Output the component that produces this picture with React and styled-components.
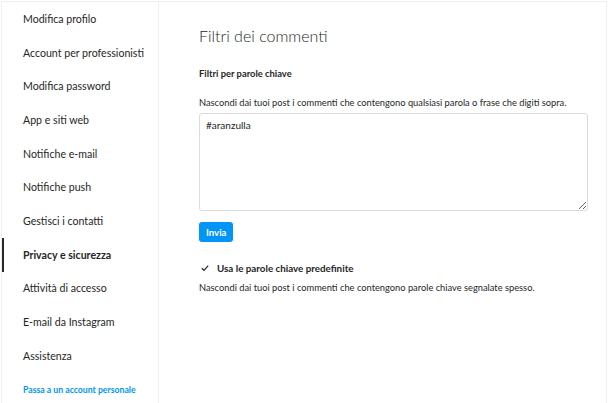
import * as React from 'react'
import styled, { createGlobalStyle } from 'styled-components'

const GlobalStyle = createGlobalStyle`
  body {
    margin: 0;
    background: #ffffff;
    font-family: Lato, 'Open Sans', sans-serif;
    color: #262626;
  }
`

const Frame = styled.div`
  display: flex;
  width: 606px;
  height: 420px;
  margin: 1px 0 0 1px;
  border: 1px solid #efefef;
  border-bottom: none;
  box-sizing: border-box;
`

const Sidebar = styled.nav`
  width: 156px;
  flex-shrink: 0;
  border-right: 1px solid #efefef;
  display: flex;
  flex-direction: column;
`

const NavItem = styled.div`
  height: 33.7px;
  display: flex;
  align-items: center;
  padding-left: ${p => (p.$active ? '19px' : '21px')};
  border-left: ${p => (p.$active ? '2px solid #262626' : 'none')};
  font-size: 10.6px;
  font-weight: ${p => (p.$active ? 700 : 400)};
  color: #262626;
  white-space: nowrap;
`

const SwitchLink = styled(NavItem)`
  color: #0095f6;
  font-weight: 700;
  font-size: 8.7px;
`

const Main = styled.main`
  flex: 1;
  padding: 22px 18px 0 40px;
  display: flex;
  flex-direction: column;
`

const Title = styled.h1`
  margin: 0;
  font-size: 16px;
  font-weight: 300;
  color: #262626;
  line-height: 24px;
`

const Label = styled.h2`
  margin: 19px 0 0;
  font-size: 9.4px;
  font-weight: 700;
  line-height: 14px;
`

const Help = styled.p`
  margin: ${p => (p.$tight ? '6px 0 0' : '15px 0 0')};
  font-size: 9.3px;
  line-height: 14px;
  color: #262626;
  white-space: nowrap;
`

const TextBox = styled.textarea`
  margin-top: 3px;
  width: 389px;
  height: 98px;
  box-sizing: border-box;
  border: 1px solid #dbdbdb;
  border-radius: 3px;
  padding: 5px 6px;
  font-family: Lato, 'Open Sans', sans-serif;
  font-size: 10px;
  color: #262626;
  outline: none;
`

const Button = styled.button`
  margin-top: 11px;
  align-self: flex-start;
  height: 20px;
  padding: 0 7px;
  border: none;
  border-radius: 3px;
  background: #0095f6;
  color: #ffffff;
  font-family: Lato, 'Open Sans', sans-serif;
  font-weight: 700;
  font-size: 9.6px;
`

const CheckRow = styled.label`
  margin-top: 19px;
  display: flex;
  align-items: center;
  gap: 8px;
  padding-left: 2px;
  font-size: 9.8px;
  font-weight: 700;
  line-height: 14px;
`

const Tick = styled.svg`
  width: 8px;
  height: 8px;
`

const items = [
  'Modifica profilo',
  'Account per professionisti',
  'Modifica password',
  'App e siti web',
  'Notifiche e-mail',
  'Notifiche push',
  'Gestisci i contatti',
  'Privacy e sicurezza',
  'Attività di accesso',
  'E-mail da Instagram',
  'Assistenza',
]

export default function App() {
  return (
    <>
      <GlobalStyle />
      <Frame>
        <Sidebar>
          {items.map(item => (
            <NavItem key={item} $active={item === 'Privacy e sicurezza'}>
              {item}
            </NavItem>
          ))}
          <SwitchLink>Passa a un account personale</SwitchLink>
        </Sidebar>
        <Main>
          <Title>Filtri dei commenti</Title>
          <Label>Filtri per parole chiave</Label>
          <Help>
            Nascondi dai tuoi post i commenti che contengono qualsiasi parola o frase che digiti sopra.
          </Help>
          <TextBox defaultValue="#aranzulla" />
          <Button>Invia</Button>
          <CheckRow>
            <Tick viewBox="0 0 8 8">
              <path d="M0.8 4.2 L3 6.3 L7.2 1.6" fill="none" stroke="#262626" strokeWidth="1.2" />
            </Tick>
            Usa le parole chiave predefinite
          </CheckRow>
          <Help $tight>
            Nascondi dai tuoi post i commenti che contengono parole chiave segnalate spesso.
          </Help>
        </Main>
      </Frame>
    </>
  )
}
